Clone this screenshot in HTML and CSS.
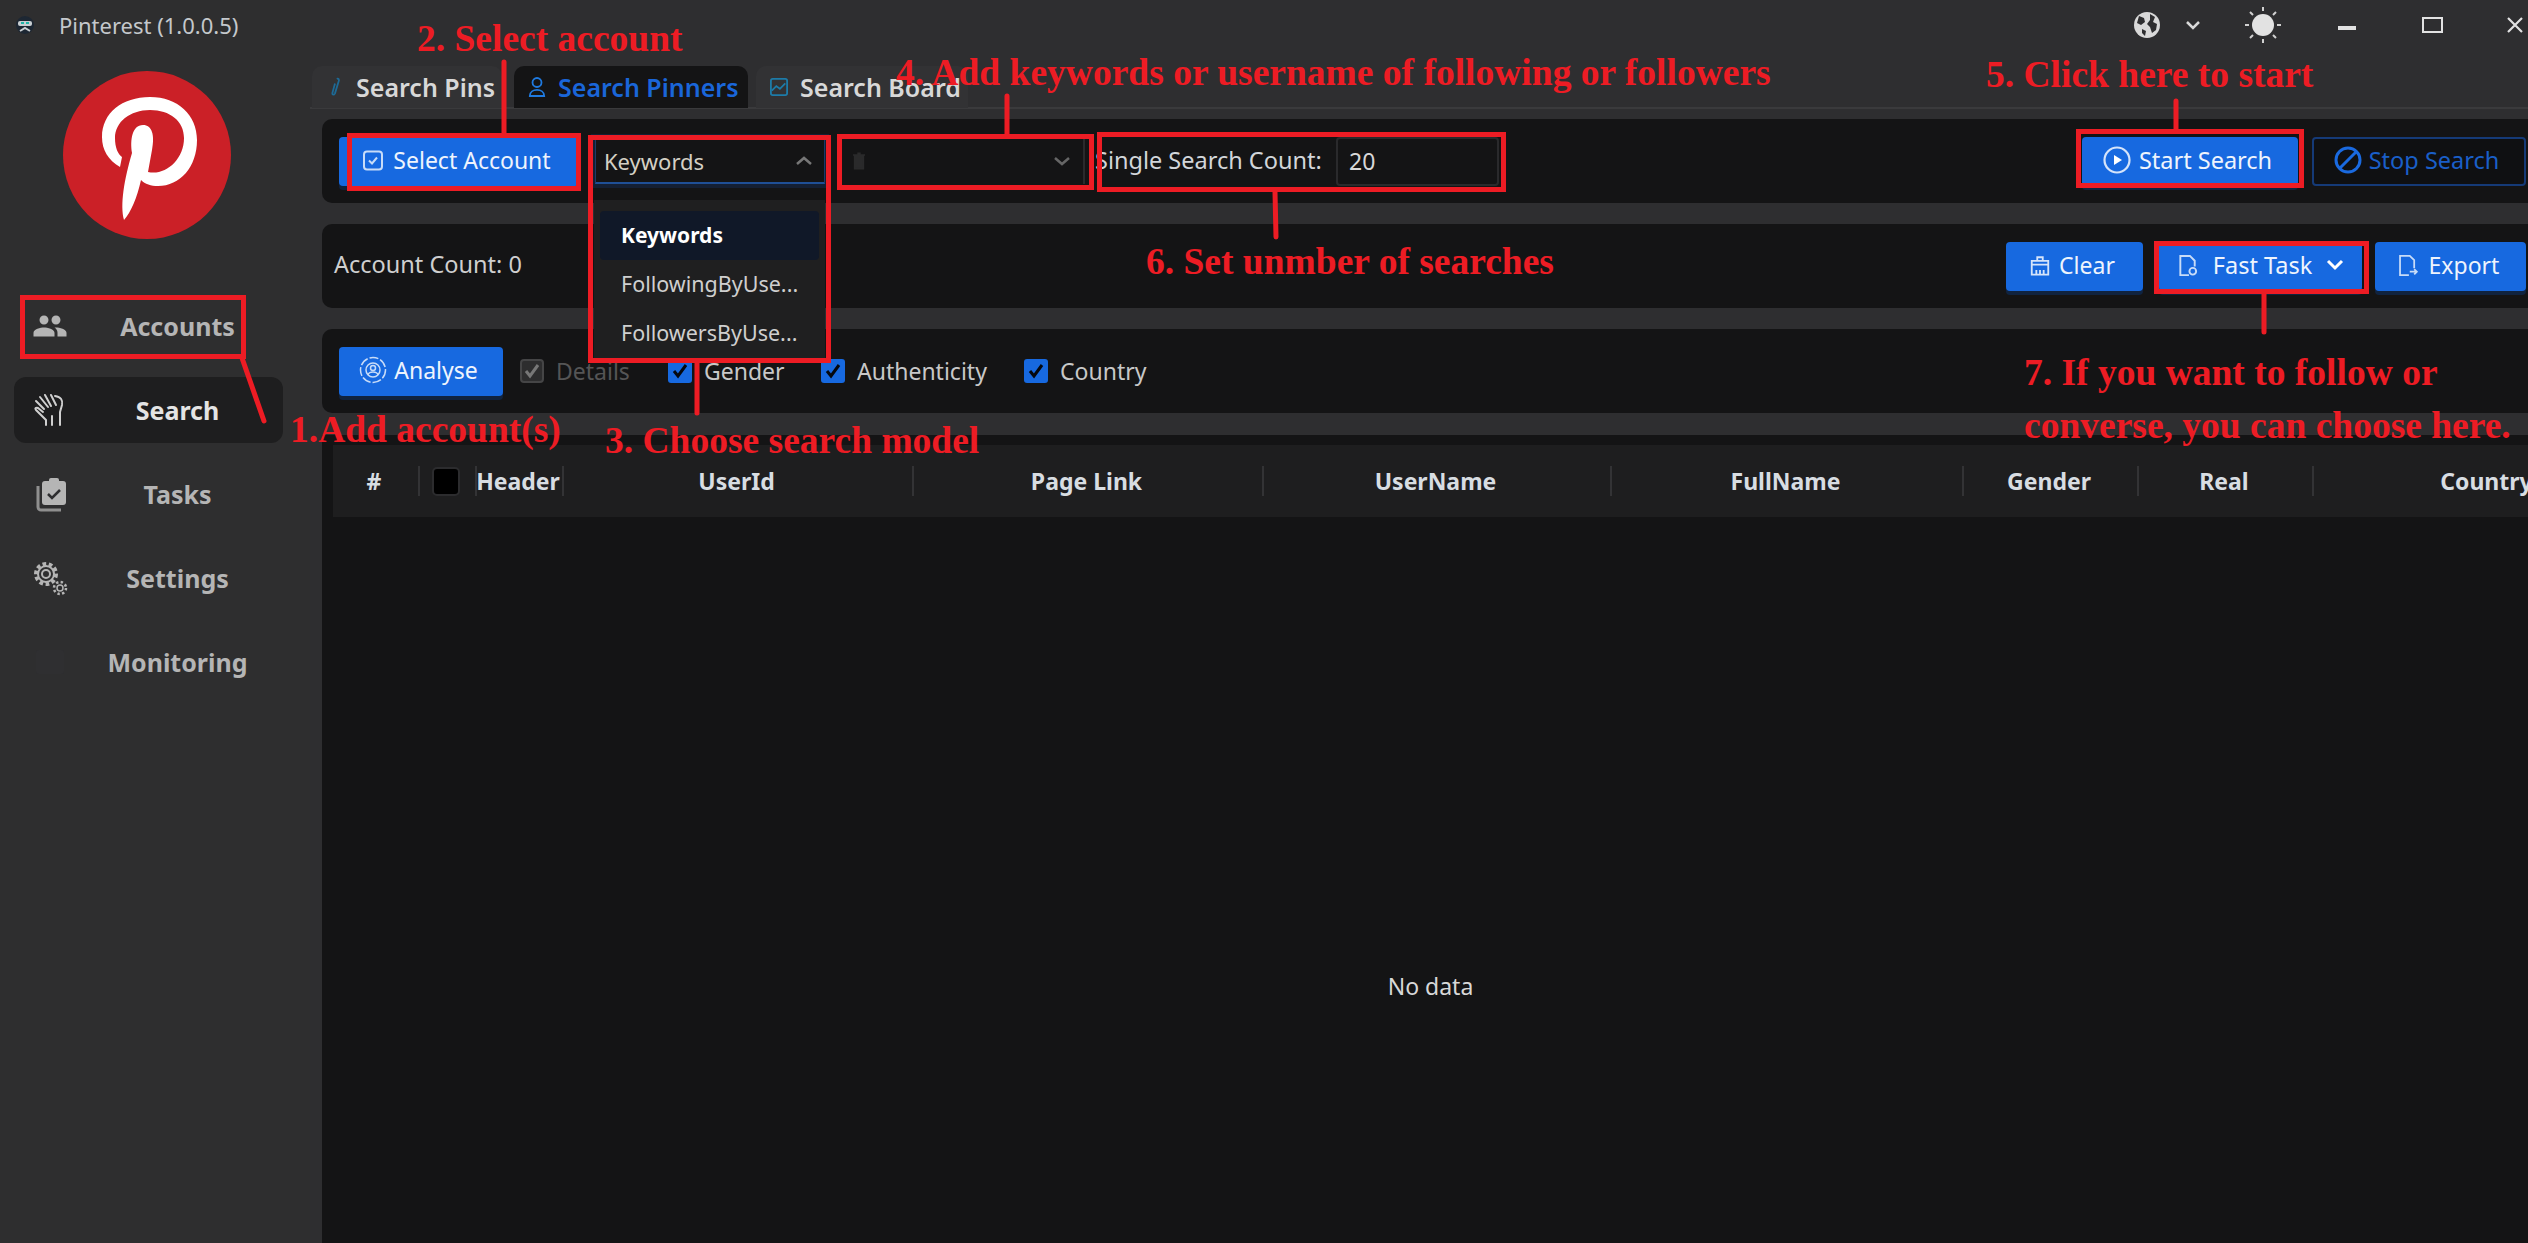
FILE: index.html
```html
<!DOCTYPE html>
<html lang="en">
<head>
    <meta charset="UTF-8">
    <meta name="viewport" content="width=device-width, initial-scale=1.0">
    <title>Pinterest (1.0.0.5)</title>
    <link rel="stylesheet" href="styles.css">
</head>
<body>
    <div class="app">
        <aside class="sidebar">
            <div class="app-title">
                <svg class="app-icon" viewBox="0 0 20 20">
                    <circle cx="10" cy="10" r="9" fill="#1d2733"/>
                    <rect x="3" y="6" width="14" height="5" rx="2" fill="#c9ced2"/>
                    <rect x="6" y="7" width="3" height="2" fill="#1fb5a8"/>
                    <rect x="11" y="7" width="3" height="2" fill="#1fb5a8"/>
                    <path d="M5 16l5-3 5 3" fill="none" stroke="#c9ced2" stroke-width="2"/>
                </svg>
                <span>Pinterest (1.0.0.5)</span>
            </div>
            <svg class="logo" viewBox="63 71 168 168">
                <circle cx="147" cy="155" r="84" fill="#cb2027"/>
                <path fill="#fff" d="M120 167C108 160 102 150 102 137C102 113 122 97 150 97C178 97 197 115 197 140C197 167 180 186 158 186C151 186 145 184 141 180C137 198 131 212 124 220C120 205 124 180 132 153C130 140 132 125 143 125C152 125 155 135 152 150L148 172C165 176 184 160 184 138C184 121 170 110 150 110C130 110 115 122 115 138C115 148 118 154 122 157Z"/>
            </svg>
            <nav class="nav">
                <a class="nav-item">
                    <svg class="nav-icon" viewBox="0 0 24 24"><path fill="#b5b5b5" d="M16 11c1.66 0 2.99-1.34 2.99-3S17.66 5 16 5c-1.66 0-3 1.34-3 3s1.34 3 3 3zm-8 0c1.66 0 2.99-1.34 2.99-3S9.66 5 8 5C6.34 5 5 6.34 5 8s1.34 3 3 3zm0 2c-2.33 0-7 1.17-7 3.5V19h14v-2.5c0-2.33-4.67-3.5-7-3.5zm8 0c-.29 0-.62.02-.97.05 1.16.84 1.97 1.97 1.97 3.45V19h6v-2.5c0-2.33-4.67-3.5-7-3.5z"/></svg>
                    <span>Accounts</span>
                </a>
                <a class="nav-item active">
                    <svg class="nav-icon" viewBox="0 0 36 36" fill="none" stroke="#d0d0d0" stroke-width="2" stroke-linecap="round" stroke-linejoin="round">
                        <path d="M14 33v-5C11 25 7 21 4 18c-1.500-1.500 0-3 2-2l5 4"/>
                        <path d="M4 9l8 8M8 5l8 10M13 3l6 11M19 3l5 10M23 4c6 1 8 4 7 9l-2 7v13"/>
                        <path d="M20 33v-9"/>
                    </svg>
                    <span>Search</span>
                </a>
                <a class="nav-item">
                    <svg class="nav-icon" viewBox="0 0 36 36">
                        <rect x="10" y="5" width="24" height="24" rx="3" fill="#b5b5b5"/>
                        <rect x="17" y="2" width="10" height="6" rx="2" fill="#b5b5b5"/>
                        <path d="M16 18l4 4 8-8" fill="none" stroke="#2e2e30" stroke-width="2.500"/>
                        <path d="M6 10v21a3 3 0 0 0 3 3h20" fill="none" stroke="#8f8f8f" stroke-width="3"/>
                    </svg>
                    <span>Tasks</span>
                </a>
                <a class="nav-item">
                    <svg class="nav-icon" viewBox="0 0 36 36" fill="none" stroke="#b5b5b5">
                        <circle cx="14" cy="14" r="10" stroke-width="4" stroke-dasharray="3.600 2.600"/>
                        <circle cx="14" cy="14" r="8" stroke-width="2"/>
                        <circle cx="14" cy="14" r="4" stroke-width="2"/>
                        <circle cx="28" cy="28" r="6" stroke-width="2.500" stroke-dasharray="2.400 2.300"/>
                        <circle cx="28" cy="28" r="3" stroke-width="1.500"/>
                    </svg>
                    <span>Settings</span>
                </a>
                <a class="nav-item">
                    <svg class="nav-icon" viewBox="0 0 36 36"><rect x="4" y="6" width="28" height="24" rx="3" fill="#2f2f31"/></svg>
                    <span>Monitoring</span>
                </a>
            </nav>
        </aside>

        <main class="main">
            <div class="window-bar">
                <svg class="win-globe" viewBox="0 0 28 28">
                    <circle cx="14" cy="14" r="13" fill="#d9d9d9"/>
                    <path fill="#2e2e30" d="M6 5l5 2 1 4-4 3-4-2zM17 3l5 3-2 5 4 2-1 6-4 3-2-6-3-3 3-4zM9 18l4 2-1 5-3-3z"/>
                </svg>
                <svg class="win-chevron" viewBox="0 0 16 10"><path d="M2 2l6 6 6-6" fill="none" stroke="#d9d9d9" stroke-width="2.500"/></svg>
                <svg class="win-sun" viewBox="0 0 38 38">
                    <circle cx="19" cy="19" r="11" fill="#e2e2e2"/>
                    <path d="M19 1v4M19 33v4M1 19h4M33 19h4M6 6l3 3M29 29l3 3M32 6l-3 3M9 29l-3 3" stroke="#d0d0d0" stroke-width="2"/>
                </svg>
                <span class="win-min"></span>
                <span class="win-max"></span>
                <svg class="win-close" viewBox="0 0 18 18"><path d="M2 2l14 14M16 2L2 16" stroke="#e2e2e2" stroke-width="2.200"/></svg>
            </div>

            <div class="tabs">
                <div class="tab tab-pins">
                    <svg class="tab-icon" viewBox="0 0 20 24"><path d="M12 3c2-1 3 1 2 3l-4 13c-1 2-3 2-3 0l3-11" fill="none" stroke="#1d6a96" stroke-width="2"/></svg>
                    Search Pins
                </div>
                <div class="tab tab-pinners active">
                    <svg class="tab-icon" viewBox="0 0 20 24" fill="none" stroke="#1f7ae0" stroke-width="2"><circle cx="10" cy="7" r="5"/><path d="M2 22c0-9 16-9 16 0z"/></svg>
                    Search Pinners
                </div>
                <div class="tab tab-board">
                    <svg class="tab-icon" viewBox="0 0 20 20" fill="none" stroke="#1d7ba8" stroke-width="2"><rect x="1" y="1" width="18" height="18" rx="2"/><path d="M2 14l5-5 4 3 6-6"/></svg>
                    Search Board
                </div>
            </div>

            <section class="panel">
                <button class="btn btn-select">
                    <svg class="btn-icon" viewBox="0 0 22 22" fill="none" stroke="#c8dcf8" stroke-width="2"><rect x="2" y="2" width="18" height="18" rx="3"/><path d="M7 11l3 3 5-6"/></svg>
                    Select Account
                </button>
                <div class="select select-open">
                    <span>Keywords</span>
                    <svg class="select-arrow" viewBox="0 0 18 10"><path d="M2 8l7-6 7 6" fill="none" stroke="#777" stroke-width="2.500"/></svg>
                </div>
                <div class="select select-empty">
                    <svg class="trash" viewBox="0 0 14 20"><path d="M2 5h10v14H2zM0 3h14M5 1h4" fill="#2a2a2b" stroke="#2a2a2b" stroke-width="2"/></svg>
                    <svg class="select-arrow" viewBox="0 0 18 10"><path d="M2 2l7 6 7-6" fill="none" stroke="#666" stroke-width="2.500"/></svg>
                </div>
                <label class="count-label">Single Search Count:</label>
                <div class="count-input">20</div>
                <div class="panel-right">
                    <button class="btn btn-start">
                        <svg class="btn-icon-lg" viewBox="0 0 28 28"><circle cx="14" cy="14" r="12.500" fill="none" stroke="#d5e4fa" stroke-width="2.200"/><path d="M11 9l8 5-8 5z" fill="#fff"/></svg>
                        Start Search
                    </button>
                    <button class="btn btn-stop">
                        <svg class="btn-icon-lg" viewBox="0 0 28 28" fill="none" stroke="#1a6ae0" stroke-width="3"><circle cx="14" cy="14" r="12"/><path d="M6 22L22 6"/></svg>
                        Stop Search
                    </button>
                </div>
            </section>

            <section class="panel">
                <span class="account-count">Account Count: 0</span>
                <div class="panel-right">
                    <button class="btn btn-clear">
                        <svg class="btn-icon" viewBox="0 0 24 24" fill="none" stroke="#d5e4fa" stroke-width="2"><path d="M9 7V3h6v4M3 11V7h18v4M3 11h18v11H3zM8 22v-5M12 22v-5M16 22v-5"/></svg>
                        Clear
                    </button>
                    <button class="btn btn-fast">
                        <svg class="btn-icon" viewBox="0 0 22 24" fill="none" stroke="#c8dcf8" stroke-width="2"><path d="M12 22H3V2h10l5 5v6"/><circle cx="16" cy="18" r="3.500"/></svg>
                        Fast Task
                        <svg class="fast-chevron" viewBox="0 0 18 12"><path d="M2 2l7 7 7-7" fill="none" stroke="#fff" stroke-width="3"/></svg>
                    </button>
                    <button class="btn btn-export">
                        <svg class="btn-icon" viewBox="0 0 24 26" fill="none" stroke="#c8dcf8" stroke-width="2"><path d="M13 24H3V2h11l5 5v9"/><path d="M14 20h8M19 17l3 3-3 3"/></svg>
                        Export
                    </button>
                </div>
            </section>

            <section class="panel panel-options">
                <button class="btn btn-analyse">
                    <svg class="btn-icon-lg" viewBox="0 0 28 28" fill="none" stroke="#c8dcf8" stroke-width="1.500"><circle cx="14" cy="14" r="12.500" stroke-dasharray="9 2"/><circle cx="14" cy="14" r="7"/><circle cx="14" cy="12" r="2.500"/><path d="M9 19c1-4 9-4 10 0"/></svg>
                    Analyse
                </button>
                <label class="check check-details">
                    <svg class="check-box" viewBox="0 0 24 24"><rect x="1" y="1" width="22" height="22" rx="3" fill="#2d2d2e" stroke="#454546" stroke-width="2"/><path d="M6 12l4 5 8-11" fill="none" stroke="#777" stroke-width="3"/></svg>
                    Details
                </label>
                <label class="check check-gender">
                    <svg class="check-box" viewBox="0 0 24 24"><rect width="24" height="24" rx="3" fill="#1769e0"/><path d="M6 12l4 5 8-11" fill="none" stroke="#05080f" stroke-width="3"/></svg>
                    Gender
                </label>
                <label class="check check-real">
                    <svg class="check-box" viewBox="0 0 24 24"><rect width="24" height="24" rx="3" fill="#1769e0"/><path d="M6 12l4 5 8-11" fill="none" stroke="#05080f" stroke-width="3"/></svg>
                    Authenticity
                </label>
                <label class="check">
                    <svg class="check-box" viewBox="0 0 24 24"><rect width="24" height="24" rx="3" fill="#1769e0"/><path d="M6 12l4 5 8-11" fill="none" stroke="#05080f" stroke-width="3"/></svg>
                    Country
                </label>
            </section>

            <section class="results">
                <div class="table-head">
                    <div class="th">#</div>
                    <div class="th"><span class="head-check"></span></div>
                    <div class="th">Header</div>
                    <div class="th">UserId</div>
                    <div class="th">Page Link</div>
                    <div class="th">UserName</div>
                    <div class="th">FullName</div>
                    <div class="th">Gender</div>
                    <div class="th">Real</div>
                    <div class="th">Country</div>
                </div>
                <div class="empty">No data</div>
            </section>
        </main>
    </div>

    <!-- dropdown that is open over the panels -->
    <div class="dropdown">
        <div class="dropdown-item selected">Keywords</div>
        <div class="dropdown-item">FollowingByUse...</div>
        <div class="dropdown-item">FollowersByUse...</div>
    </div>

    <!-- red annotations on top of the screenshot -->
    <svg class="leaders" viewBox="0 0 2528 1243">
        <path d="M242 358L264 421M504 62V133M697 363V413M1007 96V134M1275 192L1276 237M2176 101V129M2264 294V332"/>
    </svg>
    <div class="mark mark-accounts"></div>
    <div class="mark mark-select"></div>
    <div class="mark mark-model"></div>
    <div class="mark mark-keyword"></div>
    <div class="mark mark-count"></div>
    <div class="mark mark-start"></div>
    <div class="mark mark-fast"></div>

    <div class="note note-1">1.Add account(s)</div>
    <div class="note note-2">2. Select account</div>
    <div class="note note-3">3. Choose search model</div>
    <div class="note note-4">4. Add keywords or username of following or followers</div>
    <div class="note note-5">5. Click here to start</div>
    <div class="note note-6">6. Set unmber of searches</div>
    <div class="note note-7">7. If you want to follow or<br>converse, you can choose here.</div>
</body>
</html>
```

FILE: styles.css
```css
* {
    margin: 0;
    padding: 0;
    box-sizing: border-box;
    font-family: "Noto Sans", "Open Sans", sans-serif;
}

html, body {
    width: 2528px;
    height: 1243px;
    overflow: hidden;
}

body {
    position: relative;
    background-color: #2e2e30;
    color: #d8d8d8;
    font-size: 23px;
}

.app {
    display: flex;
    height: 1243px;
}

/* sidebar */
.sidebar {
    flex: 0 0 310px;
    background-color: #2e2e2f;
}

.app-title {
    display: flex;
    align-items: center;
    gap: 24px;
    height: 50px;
    padding-left: 15px;
    font-size: 22px;
    color: #c4c8cc;
}

.app-icon {
    width: 20px;
    height: 20px;
}

.logo {
    display: block;
    width: 168px;
    height: 168px;
    margin: 21px 0 0 63px;
}

.nav {
    margin-top: 54px;
    display: flex;
    flex-direction: column;
    gap: 18px;
    padding-left: 14px;
}

.nav-item {
    position: relative;
    display: flex;
    align-items: center;
    justify-content: center;
    width: 269px;
    height: 66px;
    font-size: 25px;
    font-weight: 700;
    color: #b5b5b5;
    border-radius: 12px;
}

.nav-item span {
    margin-left: 58px;
}

.nav-item.active {
    background-color: #1e1e1f;
    color: #e4e4e4;
}

.nav-icon {
    position: absolute;
    left: 18px;
    top: 15px;
    width: 36px;
    height: 36px;
}

/* window bar */
.main {
    flex: 1;
    min-width: 0;
    background-color: #2e2e30;
}

.window-bar {
    display: flex;
    align-items: center;
    height: 66px;
    padding: 0 4px 16px 0;
    justify-content: flex-end;
}

.win-globe {
    width: 28px;
    height: 28px;
}

.win-chevron {
    width: 16px;
    height: 10px;
    margin-left: 24px;
}

.win-sun {
    width: 38px;
    height: 38px;
    margin-left: 43px;
}

.win-min {
    width: 18px;
    height: 4px;
    background-color: #e2e2e2;
    margin: 6px 0 0 56px;
}

.win-max {
    width: 21px;
    height: 16px;
    border: 2px solid #e2e2e2;
    margin-left: 66px;
}

.win-close {
    width: 18px;
    height: 18px;
    margin-left: 63px;
}

/* tabs */
.tabs {
    display: flex;
    height: 43px;
    padding-left: 2px;
    border-bottom: 2px solid #3a3a3c;
}

.tab {
    display: flex;
    align-items: center;
    gap: 12px;
    height: 42px;
    padding-left: 14px;
    background-color: #323234;
    border-radius: 10px 10px 0 0;
    font-size: 25px;
    font-weight: 600;
    color: #d8d8d8;
}

.tab-pins {
    width: 190px;
    margin-right: 12px;
}

.tab-pinners {
    width: 234px;
    margin-right: 8px;
}

.tab-board {
    width: 212px;
}

.tab.active {
    background-color: #141415;
    color: #1a66d9;
}

.tab-icon {
    width: 18px;
    height: 22px;
}

/* panels */
.panel {
    display: flex;
    align-items: center;
    height: 84px;
    margin: 10px 0 21px 12px;
    padding: 0 2px 0 17px;
    background-color: #141415;
    border-radius: 10px 0 0 10px;
}

.panel + .panel {
    margin-top: 0;
}

.panel-right {
    display: flex;
    align-items: center;
    margin-left: auto;
}

.btn {
    display: flex;
    align-items: center;
    justify-content: center;
    height: 49px;
    padding: 0 5px 2px 0;
    border: none;
    border-radius: 4px;
    background-color: #1769e0;
    color: #eef4fd;
    font-size: 23px;
    box-shadow: 0 4px 0 #10233f;
}

.btn-icon {
    width: 22px;
    height: 23px;
}

.btn-icon-lg {
    width: 28px;
    height: 28px;
}

.btn-select {
    width: 240px;
    gap: 9px;
}

.select {
    display: flex;
    align-items: center;
    justify-content: space-between;
    height: 46px;
    background-color: #141415;
}

.select-open {
    width: 230px;
    margin-left: 16px;
    padding: 0 11px 0 8px;
    border: 1px solid #1c3a69;
    border-bottom: 2px solid #1f4f96;
    box-shadow: 0 0 0 4px #141f33;
    font-size: 22px;
    color: #d4d0c4;
}

.select-empty {
    width: 244px;
    margin-left: 16px;
    padding: 0 12px 0 12px;
    border-right: 2px solid #2a2a2c;
}

.select-arrow {
    width: 18px;
    height: 10px;
}

.trash {
    width: 12px;
    height: 18px;
}

.count-label {
    width: 241px;
    margin: 0 0 2px 10px;
    font-size: 23.500px;
    color: #d2d6da;
    white-space: nowrap;
}

.count-input {
    width: 163px;
    height: 49px;
    padding-left: 11px;
    line-height: 45px;
    border: 2px solid #2a2a2c;
    border-radius: 4px;
    font-size: 23px;
}

.btn-start {
    width: 216px;
    gap: 8px;
    font-size: 23.500px;
}

.btn-stop {
    width: 214px;
    gap: 7px;
    margin-left: 14px;
    background-color: #0f1012;
    border: 2px solid #153a77;
    color: #1a5fc8;
    font-size: 23.500px;
    box-shadow: none;
}

.account-count {
    margin: 0 0 5px -5px;
    font-size: 23.500px;
    color: #cfcfcf;
}

.btn-clear {
    width: 137px;
    gap: 8px;
}

.btn-fast {
    width: 203px;
    margin-left: 16px;
    gap: 14px;
    padding-right: 0;
    font-size: 23.500px;
}

.fast-chevron {
    width: 18px;
    height: 12px;
}

.btn-export {
    width: 151px;
    margin-left: 13px;
    gap: 10px;
}

.panel-options {
    margin-bottom: 22px;
}

.btn-analyse {
    width: 164px;
    gap: 7px;
}

.check {
    display: flex;
    align-items: center;
    gap: 12px;
    font-size: 23px;
    line-height: 30px;
    color: #c8c8c8;
}

.check-box {
    width: 24px;
    height: 24px;
}

.check-details {
    width: 148px;
    margin-left: 17px;
    color: #555;
}

.check-gender {
    width: 153px;
}

.check-real {
    width: 203px;
}

/* table */
.results {
    height: 808px;
    margin-left: 12px;
    padding: 10px 0 0 11px;
    background-color: #141415;
    overflow: hidden;
}

.table-head {
    display: grid;
    grid-template-columns: 87px 57px 87px 350px 350px 348px 352px 175px 175px 350px;
    align-items: center;
    width: 2331px;
    height: 72px;
    background-color: #1e1e1f;
}

.th {
    display: flex;
    align-items: center;
    justify-content: center;
    height: 30px;
    padding-right: 3px;
    border-right: 2px solid #333335;
    font-size: 23px;
    font-weight: 700;
    color: #d8dde2;
}

.head-check {
    width: 28px;
    height: 29px;
    background-color: #000;
    border: 2px solid #2c2c2e;
    border-radius: 5px;
}

.empty {
    padding-top: 453px;
    text-align: center;
    font-size: 23px;
    color: #d8d8d8;
}

/* open dropdown */
.dropdown {
    position: absolute;
    left: 594px;
    top: 200px;
    width: 231px;
    height: 158px;
    padding: 11px 6px 0;
    background-color: #1f1f20;
}

.dropdown-item {
    height: 49px;
    padding-left: 21px;
    line-height: 48px;
    font-size: 21.500px;
    color: #cfcfcf;
    white-space: nowrap;
}

.dropdown-item.selected {
    background-color: #101828;
    color: #fff;
    font-weight: 700;
    font-size: 21px;
    border-radius: 4px;
}

/* annotations */
.leaders {
    position: absolute;
    left: 0;
    top: 0;
    width: 2528px;
    height: 1243px;
    fill: none;
    stroke: #ed1c24;
    stroke-width: 5;
    stroke-linecap: round;
}

.mark {
    position: absolute;
    border: 5px solid #ed1c24;
}

.mark-accounts { left: 20px; top: 295px; width: 226px; height: 64px; }
.mark-select { left: 347px; top: 133px; width: 234px; height: 58px; }
.mark-model { left: 588px; top: 135px; width: 243px; height: 228px; }
.mark-keyword { left: 837px; top: 134px; width: 257px; height: 56px; }
.mark-count { left: 1097px; top: 132px; width: 409px; height: 60px; }
.mark-start { left: 2076px; top: 129px; width: 228px; height: 59px; }
.mark-fast { left: 2154px; top: 241px; width: 215px; height: 53px; }

.note {
    position: absolute;
    font-family: "Liberation Serif", serif;
    font-weight: 700;
    font-size: 37.500px;
    line-height: 40px;
    color: #ed1c24;
    white-space: nowrap;
}

.note-1 { left: 290px; top: 410px; }
.note-2 { left: 417px; top: 19px; }
.note-3 { left: 605px; top: 421px; }
.note-4 { left: 896px; top: 53px; }
.note-5 { left: 1986px; top: 55px; }
.note-6 { left: 1146px; top: 242px; }
.note-7 { left: 2024px; top: 346px; line-height: 53px; }
```
